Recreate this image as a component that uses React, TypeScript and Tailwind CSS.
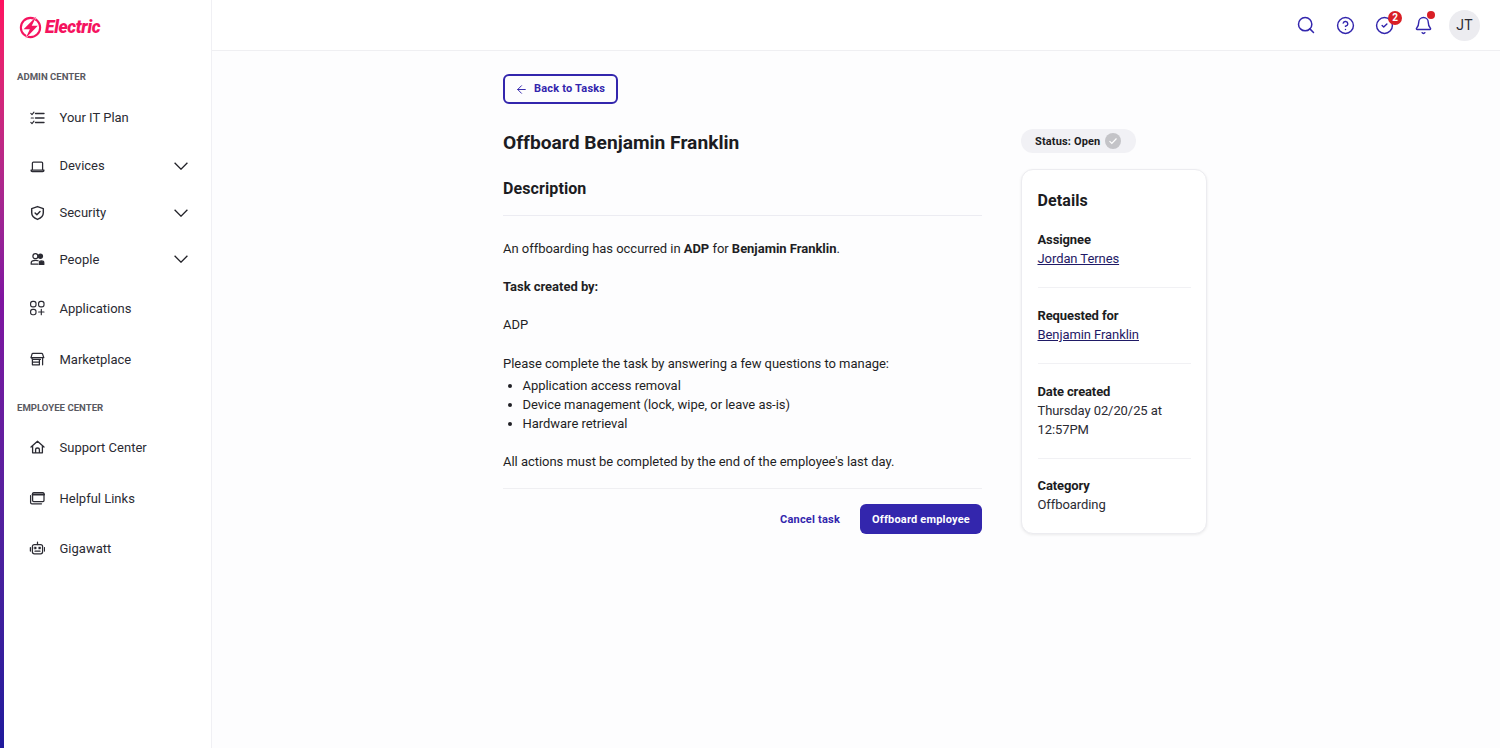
import { ArrowLeft, Bell, CircleCheck, CircleHelp, Search } from "lucide-react";
import type { ReactNode } from "react";

const iconProps = {
  width: 16,
  height: 16,
  viewBox: "0 0 16 16",
  fill: "none",
  stroke: "#2b2b33",
  strokeWidth: 1.25,
  strokeLinecap: "round" as const,
  strokeLinejoin: "round" as const,
};

function PlanIcon() {
  return (
    <svg {...iconProps}>
      <path d="M1.8 3.4l1.2 1.2 2-2.4M2.2 8h2.2M1.8 12.4l1.2 1.2 2-2.4" strokeWidth={1.1} />
      <path d="M6.5 3.5H15M6.5 8H15M6.5 12.5H15" strokeWidth={1.4} />
    </svg>
  );
}

function DevicesIcon() {
  return (
    <svg {...iconProps}>
      <path d="M3.4 11.6V5c0-.6.4-1 1-1h8.2c.6 0 1 .4 1 1v6.6M2 12h13c0 1-.5 1.6-1.3 1.6H3.3C2.5 13.6 2 13 2 12z" />
    </svg>
  );
}

function ShieldIcon() {
  return (
    <svg {...iconProps} strokeWidth={1.45}>
      <path d="M8.5 1.6l5.8 2v4.2c0 3.1-2.3 5.4-5.8 6.6-3.5-1.2-5.8-3.5-5.8-6.6V3.6l5.8-2z" />
      <path d="M6.1 7.9l1.8 1.8 3.1-3.2" />
    </svg>
  );
}

function PeopleIcon() {
  return (
    <svg {...iconProps}>
      <circle cx="6.4" cy="5.2" r="2.5" />
      <path d="M2.2 13.2v-1.3c0-1.6 1.9-2.6 4.3-2.6 1 0 1.9.2 2.6.5M2.2 13.2h6.8" />
      <circle cx="11.4" cy="5.2" r="2.1" fill="#2b2b33" />
      <path d="M10.4 13.4v-1.6c0-1.1.7-1.8 2-1.8s2.4.8 2.4 1.8v1.6z" fill="#2b2b33" />
    </svg>
  );
}

function AppsIcon() {
  return (
    <svg {...iconProps} strokeWidth={1.15}>
      <rect x="1.6" y="1.4" width="5.4" height="5.4" rx="2.1" />
      <rect x="9.6" y="1.4" width="5.4" height="5.4" rx="2.1" />
      <rect x="1.6" y="9.3" width="5.4" height="5.4" rx="2.1" />
      <path d="M12.3 9.3v5.4M9.6 12H15" />
    </svg>
  );
}

function StoreIcon() {
  return (
    <svg {...iconProps}>
      <path d="M4 2.4h8.6c.5 0 .8.2 1 .7l1.2 3.6H2l1-3.6c.1-.5.5-.7 1-.7zM2.6 6.8c0 1 1 1.6 2 1.6h6.8M3.4 8.4v5.4h7V8.4M3.4 11h7M13.6 7v6.8" />
    </svg>
  );
}

function HomeIcon() {
  return (
    <svg {...iconProps} strokeWidth={1.3}>
      <path d="M2 8l6.5-5.8L15 8M3.6 7v6.8h9.8V7M6.6 13.8v-3c0-1 .9-1.8 1.9-1.8s1.9.8 1.9 1.8v3" />
    </svg>
  );
}

function LinksIcon() {
  return (
    <svg {...iconProps}>
      <path d="M1.6 5.5v7c0 .8.5 1.3 1.3 1.3h9.6" />
      <rect x="3.6" y="2.6" width="11.4" height="9" rx="1.1" />
      <path d="M3.6 4.4h11.4" strokeWidth={2} />
    </svg>
  );
}

function BotIcon() {
  return (
    <svg {...iconProps}>
      <rect x="3.4" y="4.6" width="10.2" height="9.2" rx="2" />
      <path d="M8.5 4.6V2.2M1.4 7.6v3.4M15.6 7.6v3.4M6 11.2h5" />
      <rect x="5.4" y="7" width="1.8" height="2" fill="#2b2b33" strokeWidth={0.4} />
      <rect x="9.8" y="7" width="1.8" height="2" fill="#2b2b33" strokeWidth={0.4} />
    </svg>
  );
}

function Chevron() {
  return (
    <svg width="14" height="8" viewBox="0 0 14 8" fill="none" stroke="#222228" strokeWidth="1.3">
      <path d="M.6.8L7 7.2 13.4.8" />
    </svg>
  );
}

function NavItem({
  icon,
  label,
  chevron,
  className,
}: {
  icon: ReactNode;
  label: string;
  chevron?: boolean;
  className: string;
}) {
  return (
    <a href="#" className={`flex items-center pl-[29px] pr-[23px] ${className}`}>
      <span className="flex w-[16px] items-center justify-center">{icon}</span>
      <span className="ml-[14.5px] flex-1 text-[13px] leading-none text-[#2b2b33]">{label}</span>
      {chevron && <Chevron />}
    </a>
  );
}

function SectionLabel({ children, className }: { children: ReactNode; className: string }) {
  return (
    <div className={`pl-[17px] text-[9.6px] font-bold uppercase leading-none text-[#5a5a62] ${className}`}>
      {children}
    </div>
  );
}

function Sidebar() {
  return (
    <aside className="flex h-full w-[212px] shrink-0 border-r border-[#f0f0f4] bg-white">
      <div className="h-full w-[4px] bg-gradient-to-b from-[#ff0f5f] via-[#7f14a0] via-40% to-[#1f1a9c]" />
      <div className="flex-1 -ml-[4px]">
        <div className="flex h-[55px] items-center gap-[3px] pl-[19px]">
          <svg width="23" height="23" viewBox="0 0 21 21" fill="none">
            <circle cx="10.5" cy="10.5" r="8.8" stroke="#f5135f" strokeWidth="1.9" />
            <path
              d="M15.8.4L4.2 12.2h5.7L5.9 20.6 17.2 8.9h-5.6z"
              fill="#f5135f"
              stroke="#fff"
              strokeWidth="0.9"
              paintOrder="stroke"
            />
          </svg>
          <span className="text-[17.5px] font-black italic leading-none tracking-[-0.35px] text-[#f5135f]">Electric</span>
        </div>
        <SectionLabel className="mt-[17px]">Admin Center</SectionLabel>
        <NavItem icon={<PlanIcon />} label="Your IT Plan" className="mt-[12px] h-[48px]" />
        <NavItem icon={<DevicesIcon />} label="Devices" chevron className="h-[48px]" />
        <NavItem icon={<ShieldIcon />} label="Security" chevron className="h-[46px]" />
        <NavItem icon={<PeopleIcon />} label="People" chevron className="h-[47px]" />
        <NavItem icon={<AppsIcon />} label="Applications" className="h-[51px]" />
        <NavItem icon={<StoreIcon />} label="Marketplace" className="h-[51px]" />
        <SectionLabel className="mt-[18px]">Employee Center</SectionLabel>
        <NavItem icon={<HomeIcon />} label="Support Center" className="mt-[10px] h-[50px]" />
        <NavItem icon={<LinksIcon />} label="Helpful Links" className="mt-[1px] h-[50px]" />
        <NavItem icon={<BotIcon />} label="Gigawatt" className="h-[50px]" />
      </div>
    </aside>
  );
}

function TopBar() {
  return (
    <header className="flex h-[51px] shrink-0 items-center justify-end border-b border-[#efeff2] bg-white pr-[20px]">
      <Search size={20} strokeWidth={1.8} className="text-[#3326ad]" />
      <CircleHelp size={19} strokeWidth={1.8} className="ml-[20px] text-[#3326ad]" />
      <span className="relative ml-[20px] flex">
        <CircleCheck size={19} strokeWidth={1.8} className="text-[#3326ad]" />
        <span className="absolute -right-[8px] -top-[5px] flex h-[14px] w-[14px] items-center justify-center rounded-full bg-[#d91f26] text-[10px] font-bold leading-none text-white">
          2
        </span>
      </span>
      <span className="relative ml-[20px] flex">
        <Bell size={19} strokeWidth={1.8} className="text-[#3326ad]" />
        <span className="absolute -right-[2px] -top-[5px] h-[8px] w-[8px] rounded-full bg-[#d91f26]" />
      </span>
      <span className="ml-[16px] flex h-[31px] w-[31px] items-center justify-center rounded-full bg-[#ececf0] text-[14px] tracking-[0.3px] text-[#2b2b33]">
        JT
      </span>
    </header>
  );
}

function Detail({ label, children, last }: { label: string; children: ReactNode; last?: boolean }) {
  return (
    <div className={last ? "pt-[17px]" : "border-b border-[#f1f1f4] pt-[18px] pb-[19px]"}>
      <div className="text-[13px] font-bold leading-[19px] tracking-[-0.12px] text-[#1c1c22]">{label}</div>
      <div className="text-[13px] leading-[19px] tracking-[-0.08px] text-[#2b2b33]">{children}</div>
    </div>
  );
}

function PersonLink({ children }: { children: ReactNode }) {
  return (
    <a href="#" className="text-[#1f1a66] underline">
      {children}
    </a>
  );
}

function Task() {
  return (
    <div className="w-[479px] shrink-0">
      <a
        href="#"
        className="flex h-[30px] w-[115px] items-center rounded-[6px] border-2 border-[#3326ad] pl-[10px] text-[11px] font-bold text-[#3326ad]"
      >
        <ArrowLeft size={13} strokeWidth={1.8} />
        <span className="ml-[6px] tracking-[0.2px]">Back to Tasks</span>
      </a>
      <h1 className="mt-[25px] text-[19.2px] font-bold leading-[28px] text-[#1c1c22]">
        Offboard Benjamin Franklin
      </h1>
      <h2 className="mt-[22px] border-b border-[#ececf2] pb-[16px] text-[16px] font-bold leading-[20px] tracking-[0.1px] text-[#1c1c22]">
        Description
      </h2>
      <div className="border-b border-[#efeff2] pb-[17px] pt-[23px] text-[13px] leading-[19.1px] tracking-[-0.03px] text-[#1f1f25]">
        <p>
          An offboarding has occurred in <b>ADP</b> for <b>Benjamin Franklin</b>.
        </p>
        <p className="mt-[19.1px] font-bold">Task created by:</p>
        <p className="mt-[19.1px]">ADP</p>
        <p className="mt-[19.1px]">Please complete the task by answering a few questions to manage:</p>
        <ul className="mt-[3px] list-disc pl-[19.5px]">
          <li>Application access removal</li>
          <li>Device management (lock, wipe, or leave as-is)</li>
          <li>Hardware retrieval</li>
        </ul>
        <p className="mt-[19.1px]">All actions must be completed by the end of the employee's last day.</p>
      </div>
      <div className="mt-[15px] flex items-center justify-end gap-[20px]">
        <a href="#" className="pt-[2px] text-[11px] font-bold tracking-[0.2px] text-[#3326ad]">
          Cancel task
        </a>
        <button className="h-[30px] w-[122px] rounded-[6px] bg-[#3326ad] pt-[2px] text-[11px] font-bold tracking-[0.2px] text-white">
          Offboard employee
        </button>
      </div>
    </div>
  );
}

function Aside() {
  return (
    <div className="ml-[39px] mt-[55px] w-[186px] shrink-0">
      <div className="flex h-[24px] w-[115px] items-center rounded-full bg-[#f1f1f5] pl-[14px] text-[11px] font-bold tracking-[0.15px] text-[#1c1c22]">
        <span className="pt-[2px]">Status: Open</span>
        <span className="ml-[5px] flex h-[16px] w-[16px] items-center justify-center rounded-full bg-[#c4c4c8]">
          <svg width="10" height="10" viewBox="0 0 10 10" fill="none" stroke="#fff" strokeWidth="1.2">
            <path d="M1.5 5.2l2.3 2.3 4.7-5" />
          </svg>
        </span>
      </div>
      <div className="mt-[16px] h-[365px] rounded-[12px] border border-[#ececf0] bg-white px-[15.5px] pt-[20px] shadow-[0_1px_3px_rgba(0,0,0,0.08)]">
        <h3 className="text-[16px] font-bold leading-[22px] tracking-[0.1px] text-[#1c1c22]">Details</h3>
        <Detail label="Assignee">
          <PersonLink>Jordan Ternes</PersonLink>
        </Detail>
        <Detail label="Requested for">
          <PersonLink>Benjamin Franklin</PersonLink>
        </Detail>
        <Detail label="Date created">
          Thursday 02/20/25 at
          <br />
          12:57PM
        </Detail>
        <Detail label="Category" last>
          Offboarding
        </Detail>
      </div>
    </div>
  );
}

export default function App() {
  return (
    <div className="flex h-[748px] w-[1500px] overflow-hidden bg-[#fdfdfe] font-['Roboto',sans-serif]">
      <Sidebar />
      <div className="flex min-w-0 flex-1 flex-col">
        <TopBar />
        <main className="flex flex-1 pl-[291px] pt-[23px]">
          <Task />
          <Aside />
        </main>
      </div>
    </div>
  );
}
